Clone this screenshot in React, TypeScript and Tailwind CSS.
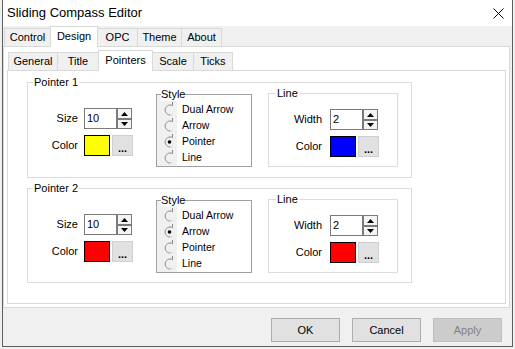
const font = "font-['Liberation_Sans',Arial,sans-serif]";

function Radio({ checked }: { checked?: boolean }) {
  return (
    <svg width="14" height="16" viewBox="0 0 14 16" className="block">
      <path d="M10.5 0 V3.6" stroke="#8a8a8a" fill="none" />
      <path d="M10.5 3.6 A5 5 0 1 0 10.5 12.4" stroke="#8a8a8a" fill="none" />
      <path d="M8 12.9 A5 5 0 0 0 10.5 12.4" stroke="#ffffff" fill="none" />
      {checked ? <circle cx="7.5" cy="8" r="1.8" fill="#000" /> : null}
    </svg>
  );
}

function Arrow({ up }: { up?: boolean }) {
  return (
    <svg width="7" height="4" viewBox="0 0 7 4" className="block">
      <path d={up ? "M0 4 L3.5 0 L7 4 Z" : "M0 0 L3.5 4 L7 0 Z"} fill="#000" />
    </svg>
  );
}

function Spin({ value }: { value: string }) {
  return (
    <div className="flex h-[21px]">
      <div className="flex w-[33px] items-center border border-[#7a7a7a] bg-white pl-[2px] text-[11px] text-black">
        {value}
      </div>
      <div className="flex w-[15px] flex-col justify-between">
        <div className="flex h-[11px] items-center justify-center border border-[#7a7a7a] bg-[#f4f4f4]">
          <Arrow up />
        </div>
        <div className="flex h-[10px] items-center justify-center border border-[#7a7a7a] bg-[#f4f4f4]">
          <Arrow />
        </div>
      </div>
    </div>
  );
}

function ColorPick({ color }: { color: string }) {
  return (
    <div className="flex h-[21px] items-center gap-[2px]">
      <div className="h-[21px] w-[26px] border border-black" style={{ background: color }} />
      <div className="flex h-[21px] w-[21px] items-end justify-center border border-[#cfcfcf] bg-[#e1e1e1] pb-[3px] text-[11px] font-bold leading-[8px] text-black">
        ...
      </div>
    </div>
  );
}

function Legend({ children, left }: { children: React.ReactNode; left: string }) {
  return (
    <span className={`absolute -top-[8px] ${left} bg-white px-[1px] text-[11px] leading-[14px] text-black`}>
      {children}
    </span>
  );
}

const styles = ["Dual Arrow", "Arrow", "Pointer", "Line"];

function PointerGroup({
  title,
  size,
  color,
  style,
  width,
  lineColor,
  height,
}: {
  title: string;
  size: string;
  color: string;
  style: string;
  width: string;
  lineColor: string;
  height: string;
}) {
  return (
    <div className={`relative ml-[19px] w-[385px] border border-[#dcdcdc] ${height}`}>
      <Legend left="left-[5px]">{title}</Legend>
      <div className="flex items-start">
        <div className="mt-[25px] grid grid-cols-[50px_auto] items-center gap-x-[6px] gap-y-[6px] text-[11px] text-black">
          <span className="text-right">Size</span>
          <Spin value={size} />
          <span className="text-right">Color</span>
          <ColorPick color={color} />
        </div>

        <div className="relative ml-[23px] mt-[11px] flex h-[73px] w-[96px] border border-[#a0a0a0] bg-white">
          <span className="absolute -top-[8px] left-[4px] z-10 bg-white text-[11px] leading-[14px] text-black">
            Style
          </span>
          <div className="flex w-[20px] flex-col bg-[#f0f0f0] pl-[5px] pt-[7px]">
            {styles.map((s) => (
              <Radio key={s} checked={s === style} />
            ))}
          </div>
          <div className="flex flex-col pl-[5px] pt-[7px] text-[10.5px] text-black">
            {styles.map((s) => (
              <span key={s} className="flex h-[16px] items-center">
                {s}
              </span>
            ))}
          </div>
        </div>

        <div className="relative ml-[16px] mt-[10px] h-[74px] w-[130px] border border-[#dcdcdc]">
          <Legend left="left-[7px]">Line</Legend>
          <div className="mt-[15px] grid grid-cols-[53px_auto] items-center gap-x-[8px] gap-y-[6px] text-[11px] text-black">
            <span className="text-right">Width</span>
            <Spin value={width} />
            <span className="text-right">Color</span>
            <ColorPick color={lineColor} />
          </div>
        </div>
      </div>
    </div>
  );
}

function Tab({
  label,
  w,
  selected,
  first,
  h,
  hSel,
}: {
  label: string;
  w: string;
  selected?: boolean;
  first?: boolean;
  h: string;
  hSel: string;
}) {
  return (
    <div
      className={`flex items-center justify-center border border-b-0 border-[#d9d9d9] text-[11px] text-black ${w} ${
        first ? "" : "-ml-px"
      } ${selected ? `relative z-10 -mb-px bg-white pb-[2px] ${hSel}` : `bg-[#f0f0f0] ${h}`}`}
    >
      {label}
    </div>
  );
}

export default function App() {
  return (
    <div className={`h-[349px] w-[515px] bg-[#f0f0f0] ${font}`}>
      <div className="ml-[2px] flex h-[347px] w-[511px] flex-col border-x border-b border-[#5f5f5f] bg-[#f0f0f0]">
        <div className="flex h-[26px] items-center justify-between bg-white pl-[4px] pr-[8px]">
          <span className="text-[13px] text-black">Sliding Compass Editor</span>
          <svg width="11" height="11" viewBox="0 0 11 11">
            <path d="M0.5 0.5 L10.5 10.5 M10.5 0.5 L0.5 10.5" stroke="#000" strokeWidth="1" />
          </svg>
        </div>

        <div className="flex h-[20px] items-end pl-[1px]">
          <Tab label="Control" w="w-[47px]" first h="h-[18px]" hSel="h-[21px]" />
          <Tab label="Design" w="w-[48px]" selected h="h-[18px]" hSel="h-[21px]" />
          <Tab label="OPC" w="w-[41px]" h="h-[18px]" hSel="h-[21px]" />
          <Tab label="Theme" w="w-[45px]" h="h-[18px]" hSel="h-[21px]" />
          <Tab label="About" w="w-[41px]" h="h-[18px]" hSel="h-[21px]" />
        </div>

        <div className="flex h-[262px] w-[507px] flex-col border border-[#d9d9d9] bg-white">
          <div className="ml-[4px] flex h-[23px] items-end">
            <Tab label="General" w="w-[50px]" first h="h-[18px]" hSel="h-[21px]" />
            <Tab label="Title" w="w-[42px]" h="h-[18px]" hSel="h-[21px]" />
            <Tab label="Pointers" w="w-[55px]" selected h="h-[18px]" hSel="h-[21px]" />
            <Tab label="Scale" w="w-[42px]" h="h-[18px]" hSel="h-[21px]" />
            <Tab label="Ticks" w="w-[40px]" h="h-[18px]" hSel="h-[21px]" />
          </div>
          <div className="ml-[3px] flex h-[234px] w-[499px] flex-col gap-[10px] border border-[#d9d9d9] bg-white pt-[11px]">
            <PointerGroup
              title="Pointer 1"
              size="10"
              color="#ffff00"
              style="Pointer"
              width="2"
              lineColor="#0000ff"
              height="h-[96px]"
            />
            <PointerGroup
              title="Pointer 2"
              size="10"
              color="#ff0000"
              style="Arrow"
              width="2"
              lineColor="#ff0000"
              height="h-[95px]"
            />
          </div>
        </div>

        <div className="mt-[10px] flex justify-end gap-[12px] pr-[10px] text-[11px]">
          <button className="h-[24px] w-[69px] border border-[#adadad] bg-[#e1e1e1] text-black">OK</button>
          <button className="h-[24px] w-[69px] border border-[#adadad] bg-[#e1e1e1] text-black">Cancel</button>
          <button className="h-[24px] w-[69px] border border-[#bfbfbf] bg-[#cccccc] text-[#838383]">Apply</button>
        </div>
      </div>
    </div>
  );
}
